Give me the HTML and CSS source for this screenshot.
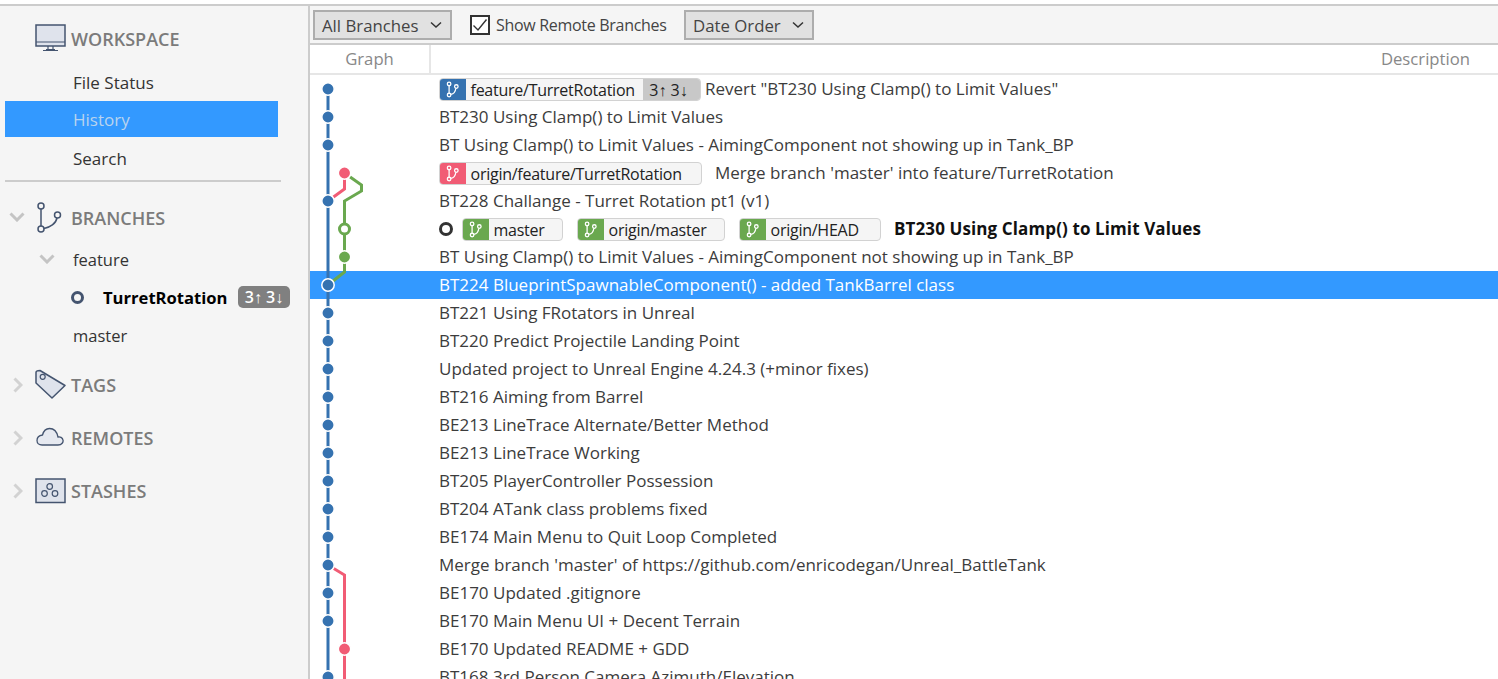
FILE: index.html
```html
<!DOCTYPE html>
<html lang="en">
<head>
<meta charset="utf-8">
<title>History</title>
<link rel="stylesheet" href="styles.css">
</head>
<body>
<svg class="defs" width="0" height="0">
  <symbol id="br" viewBox="0 0 20 20">
    <circle cx="6" cy="3.5" r="2.1"/><circle cx="6" cy="16.5" r="2.1"/><circle cx="14.5" cy="6.5" r="2.1"/>
    <path d="M6 5.6v8.8M8 15.8c3.5-.6 5.5-3.500 5.900-7.300"/>
  </symbol>
</svg>
<div class="app">
  <aside class="side">
    <div class="head head-ws">
      <svg class="ico" width="32" height="28" viewBox="0 0 32 28"><rect x="1" y="1" width="29" height="21" fill="#dfe3ec" stroke="#44546f" stroke-width="1.500"/><path d="M1 18h29M11 25.500h9M8 26.500h15M13 22v4M18 22v4" fill="none" stroke="#44546f" stroke-width="1.200"/></svg>
      <span>WORKSPACE</span>
    </div>
    <div class="nav">File Status</div>
    <div class="nav nav-on">History</div>
    <div class="nav nav-last">Search</div>
    <div class="sep"></div>
    <div class="head head-br">
      <svg class="chev" width="16" height="10" viewBox="0 0 16 10"><path d="M1.500 1.500 8 8l6.500-6.500"/></svg>
      <svg class="ico-b" width="28" height="32" viewBox="0 0 28 32"><g fill="none" stroke="#44546f" stroke-width="1.500"><circle cx="7" cy="4" r="3"/><circle cx="7" cy="27" r="3"/><circle cx="23.500" cy="13" r="3"/><path d="M7 7v17M10 26.500c6-1 12-5 13-10.500"/></g></svg>
      <span>BRANCHES</span>
    </div>
    <div class="tree tree-feature">
      <svg class="chev" width="16" height="10" viewBox="0 0 16 10"><path d="M1.500 1.500 8 8l6.500-6.500"/></svg>
      <span>feature</span>
    </div>
    <div class="tree tree-cur">
      <i class="cur-dot"></i><b>TurretRotation</b><span class="count">3↑ 3↓</span>
    </div>
    <div class="tree tree-master"><span>master</span></div>
    <div class="head head-tags">
      <svg class="chev-r" width="10" height="16" viewBox="0 0 10 16"><path d="M1.500 1.500 8 8l-6.500 6.500"/></svg>
      <svg class="ico" width="32" height="32" viewBox="0 0 32 32"><path d="M1 3.500Q1 1.500 5 1.500L30 16.500 17 29 1 14Z" fill="#dfe3ec" stroke="#44546f" stroke-width="1.500" stroke-linejoin="round"/><circle cx="7.700" cy="7.800" r="2.500" fill="none" stroke="#44546f" stroke-width="1.200"/></svg>
      <span>TAGS</span>
    </div>
    <div class="head head-rem">
      <svg class="chev-r" width="10" height="16" viewBox="0 0 10 16"><path d="M1.500 1.500 8 8l-6.500 6.500"/></svg>
      <svg class="ico ico-cloud" width="28" height="19" viewBox="0 0 28 19"><path d="M6 18H22C26 18 27.500 15 27 13 26.500 10.500 24 9.500 22 10 21 5 18 1.500 13.500 1.500 10 1.500 7.500 4 6.500 8 3 8.500 1 10.500 1 13.500 1 16 3 18 6 18Z" fill="#e6e9f0" stroke="#44546f" stroke-width="1.300"/></svg>
      <span>REMOTES</span>
    </div>
    <div class="head head-st">
      <svg class="chev-r" width="10" height="16" viewBox="0 0 10 16"><path d="M1.500 1.500 8 8l-6.500 6.500"/></svg>
      <svg class="ico" width="32" height="26" viewBox="0 0 32 26"><rect x="1" y="1" width="29" height="23.500" fill="#dfe3ec" stroke="#44546f" stroke-width="1.500"/><g fill="none" stroke="#44546f" stroke-width="1.200"><circle cx="14.700" cy="8.500" r="2.800"/><circle cx="9.500" cy="15.500" r="2.800"/><circle cx="20" cy="15.500" r="2.800"/></g></svg>
      <span>STASHES</span>
    </div>
  </aside>
  <main class="main">
    <div class="toolbar">
      <div class="drop drop-a">All Branches<svg class="dchev" width="12" height="8" viewBox="0 0 12 8"><path d="M1 1.500 6 6l5-4.500"/></svg></div>
      <label class="chk"><span class="box"><svg width="16" height="16" viewBox="0 0 16 16"><path d="M1.500 8.500 6 13 14.500 2.500" fill="none" stroke="#333" stroke-width="1.400"/></svg></span>Show Remote Branches</label>
      <div class="drop drop-b">Date Order<svg class="dchev" width="12" height="8" viewBox="0 0 12 8"><path d="M1 1.500 6 6l5-4.500"/></svg></div>
    </div>
    <div class="cols"><div class="col-g">Graph</div><div class="col-d">Description</div></div>
    <div class="list">
      <svg class="graph" width="120" height="604" viewBox="310 75 120 604">
        <path class="ln blue" d="M328 89V679"/>
        <path class="ln pink" d="M344.500 173V189L328 201"/>
        <path class="ln green" d="M344.500 173 361.500 185V191L344.500 201V272L328 285"/>
        <path class="ln pink" d="M328 565 344.500 575V679"/>
        <g class="dots-b">
          <circle cx="328" cy="89" r="6.200"/><circle cx="328" cy="117" r="6.200"/><circle cx="328" cy="145" r="6.200"/><circle cx="328" cy="201" r="6.200"/>
          <circle cx="328" cy="313" r="6.200"/><circle cx="328" cy="341" r="6.200"/><circle cx="328" cy="369" r="6.200"/><circle cx="328" cy="397" r="6.200"/>
          <circle cx="328" cy="425" r="6.200"/><circle cx="328" cy="453" r="6.200"/><circle cx="328" cy="481" r="6.200"/><circle cx="328" cy="509" r="6.200"/>
          <circle cx="328" cy="537" r="6.200"/><circle cx="328" cy="565" r="6.200"/><circle cx="328" cy="593" r="6.200"/><circle cx="328" cy="621" r="6.200"/>
          <circle cx="328" cy="677" r="6.200"/>
        </g>
        <circle class="dot-p" cx="344.500" cy="173" r="6.200"/>
        <circle class="dot-p" cx="344.500" cy="649" r="6.200"/>
        <circle class="ring-g" cx="344.500" cy="229" r="5"/>
        <circle class="dot-g" cx="344.500" cy="257" r="6.200"/>
        <circle class="ring-w" cx="328" cy="285" r="6.200"/>
      </svg>
      <div class="row"><span class="tag tag-0"><span class="tic blue-bg"><svg class="bi"><use href="#br"/></svg></span><span class="tname">feature/TurretRotation</span><span class="tcount">3↑ 3↓</span></span><span class="msg m-0">Revert "BT230 Using Clamp() to Limit Values"</span></div>
      <div class="row"><span class="msg">BT230 Using Clamp() to Limit Values</span></div>
      <div class="row"><span class="msg">BT Using Clamp() to Limit Values - AimingComponent not showing up in Tank_BP</span></div>
      <div class="row"><span class="tag tag-3"><span class="tic pink-bg"><svg class="bi"><use href="#br"/></svg></span><span class="tname">origin/feature/TurretRotation</span></span><span class="msg m-3">Merge branch 'master' into feature/TurretRotation</span></div>
      <div class="row"><span class="msg">BT228 Challange - Turret Rotation pt1 (v1)</span></div>
      <div class="row"><i class="head-dot"></i><span class="tag tag-m"><span class="tic green-bg"><svg class="bi"><use href="#br"/></svg></span><span class="tname">master</span></span><span class="tag tag-om"><span class="tic green-bg"><svg class="bi"><use href="#br"/></svg></span><span class="tname">origin/master</span></span><span class="tag tag-oh"><span class="tic green-bg"><svg class="bi"><use href="#br"/></svg></span><span class="tname">origin/HEAD</span></span><b class="msg m-5">BT230 Using Clamp() to Limit Values</b></div>
      <div class="row"><span class="msg">BT Using Clamp() to Limit Values - AimingComponent not showing up in Tank_BP</span></div>
      <div class="row row-on"><span class="msg">BT224 BlueprintSpawnableComponent() - added TankBarrel class</span></div>
      <div class="row"><span class="msg">BT221 Using FRotators in Unreal</span></div>
      <div class="row"><span class="msg">BT220 Predict Projectile Landing Point</span></div>
      <div class="row"><span class="msg">Updated project to Unreal Engine 4.24.3 (+minor fixes)</span></div>
      <div class="row"><span class="msg">BT216 Aiming from Barrel</span></div>
      <div class="row"><span class="msg">BE213 LineTrace Alternate/Better Method</span></div>
      <div class="row"><span class="msg">BE213 LineTrace Working</span></div>
      <div class="row"><span class="msg">BT205 PlayerController Possession</span></div>
      <div class="row"><span class="msg">BT204 ATank class problems fixed</span></div>
      <div class="row"><span class="msg">BE174 Main Menu to Quit Loop Completed</span></div>
      <div class="row"><span class="msg">Merge branch 'master' of https://github.com/enricodegan/Unreal_BattleTank</span></div>
      <div class="row"><span class="msg">BE170 Updated .gitignore</span></div>
      <div class="row"><span class="msg">BE170 Main Menu UI + Decent Terrain</span></div>
      <div class="row"><span class="msg">BE170 Updated README + GDD</span></div>
      <div class="row"><span class="msg">BT168 3rd Person Camera Azimuth/Elevation</span></div>
    </div>
  </main>
</div>
</body>
</html>
```
FILE: styles.css
```css
* { box-sizing: border-box; }
html, body { margin: 0; height: 100%; overflow: hidden; background: #fff; }
body { padding-top: 4px; font-family: "Open Sans", "Noto Sans", sans-serif; font-size: 16.5px; color: #333; }
.defs { position: absolute; }
.app { display: flex; height: 675px; border-top: 2px solid #ccc; }

.side { width: 310px; flex: none; background: #f5f5f5; border-right: 2px solid #ccc; padding-left: 5px; }
.head { display: flex; align-items: center; font-weight: 600; font-size: 18px; color: #7b7b7b; position: relative; }
.head span { position: absolute; left: 66px; }
.ico { position: absolute; left: 30px; }
.ico-b { position: absolute; left: 29px; }
.ico-cloud { left: 31px; top: 16px; }
.head-ws { height: 58px; padding-top: 8px; }
.head-ws .ico { top: 18px; }
.nav { height: 37px; padding-left: 68px; display: flex; align-items: center; color: #333; width: 273px; font-size: 17px; }
.nav-on { height: 36px; background: #3399ff; color: #b9d3ee; }
.nav-last { height: 43px; }
.sep { height: 2px; width: 276px; background: #ccc; }
.head-br { height: 72px; }
.chev, .chev-r { fill: none; stroke: #c4c4c4; stroke-width: 3; position: absolute; }
.head-br .chev { left: 4px; top: 30px; }
.head-tags, .head-rem, .head-st { height: 53px; }
.chev-r { left: 8px; stroke: #d2d2d2; }
.head-tags { margin-top: 3px; }
.tree { height: 38px; position: relative; display: flex; align-items: center; padding-left: 68px; color: #333; }
.tree .chev { left: 34px; }
.tree-feature { margin-top: -14px; }
.tree-cur b { font-weight: 700; color: #000; font-size: 16.6px; }
.cur-dot { position: absolute; left: 66px; width: 13px; height: 13px; border: 3px solid #44546f; border-radius: 50%; }
.tree-cur { padding-left: 98px; }
.count { position: absolute; left: 233px; width: 52px; height: 22px; border-radius: 5px; background: #808080; color: #fff; font-size: 16px; font-weight: 600; text-align: center; line-height: 22px; white-space: nowrap; }
.tree-master { height: 39px; }

.main { flex: 1; min-width: 0; }
.toolbar { height: 39px; background: #f5f5f5; border-bottom: 2px solid #ccc; display: flex; align-items: flex-start; padding: 4px 0 0 3px; font-size: 16.8px; }
.drop { height: 30px; background: #e1e1e1; border: 2px solid #adadad; display: flex; align-items: center; justify-content: space-between; padding: 0 8px 0 7px; color: #444; }
.drop-a { width: 139px; }
.drop-b { width: 130px; }
.dchev { fill: none; stroke: #333; stroke-width: 1.500; }
.chk { display: flex; align-items: center; height: 30px; margin-left: 18px; width: 214px; color: #444; font-size: 16px; letter-spacing: -.3px; }
.box { width: 20px; height: 20px; border: 2px solid #333; background: #fff; margin-right: 6px; flex: none; display: flex; align-items: center; justify-content: center; }
.cols { height: 30px; display: flex; border-bottom: 2px solid #e6e6e6; color: #888; font-size: 16.7px; }
.col-g { width: 121px; border-right: 2px solid #e6e6e6; text-align: center; line-height: 27px; }
.col-d { flex: 1; text-align: right; padding-right: 28px; line-height: 27px; }

.list { position: relative; height: 604px; overflow: hidden; }
.graph { position: absolute; left: 0; top: 0; z-index: 2; }
.ln { fill: none; stroke-width: 3; }
.blue { stroke: #3572b0; }
.pink { stroke: #f15c75; }
.green { stroke: #6aa84f; }
.dots-b circle { fill: #3572b0; stroke: #fff; stroke-width: 1.500; }
.dot-p { fill: #f15c75; stroke: #fff; stroke-width: 1.500; }
.dot-g { fill: #6aa84f; stroke: #fff; stroke-width: 1.500; }
.ring-g { fill: #fff; stroke: #6aa84f; stroke-width: 3; }
.ring-w { fill: #3572b0; stroke: #fff; stroke-width: 1.500; }
.row { height: 28px; padding-left: 129px; display: flex; align-items: center; white-space: nowrap; color: #3c3c3c; font-size: 17px; }
.msg { margin-bottom: 2px; }
.row-on { background: #3399ff; color: #fff; }
.tag { height: 23px; display: flex; align-items: stretch; border: 1px solid #d2d2d2; border-radius: 4px; background: #f5f5f5; color: #222; overflow: hidden; line-height: 22px; flex: none; font-size: 16px; letter-spacing: -.25px; }
.tic { width: 27px; margin: -1px 0 -1px -1px; display: flex; align-items: center; justify-content: center; flex: none; }
.bi { width: 17px; height: 17px; fill: none; stroke: #fff; stroke-width: 1.500; }
.blue-bg { background: #3572b0; }
.pink-bg { background: #f15c75; }
.green-bg { background: #6aa84f; }
.tname { padding-left: 4.500px; }
.tcount { margin-left: auto; width: 57px; padding-right: 6px; background: #c8c8c8; text-align: center; font-size: 16px; letter-spacing: 0; }
.tag-0 { width: 262px; }
.tag-3 { width: 263px; }
.tag-m { width: 101px; }
.tag-om { width: 148px; margin-left: 14px; }
.tag-oh { width: 142px; margin-left: 14px; }
.m-0 { margin-left: 4px; }
.m-3 { margin-left: 13px; }
.m-5 { margin-left: 13px; color: #111; font-weight: 700; letter-spacing: .11px; }
.head-dot { width: 14px; height: 14px; border: 3.500px solid #333; border-radius: 50%; margin-right: 9px; flex: none; }
```
